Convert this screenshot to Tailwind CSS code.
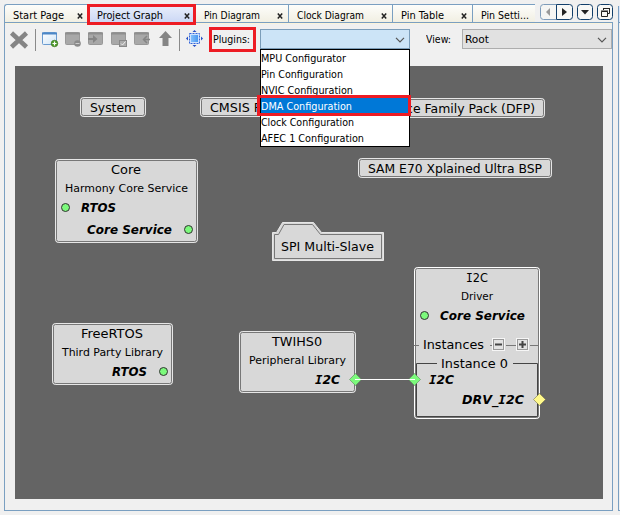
<!DOCTYPE html>
<html lang="en">
<head>
<meta charset="utf-8">
<title>Project Graph</title>
<script src="https://cdn.jsdelivr.net/npm/@tailwindcss/browser@4"></script>
</head>
<body class="relative h-[515px] w-[620px] overflow-hidden bg-[#f0f0f0] font-['DejaVu_Sans_Condensed','DejaVu_Sans',sans-serif] text-[11px] text-black">
<div class="flex h-full pt-1 pl-1">
  <section class="flex h-[507px] w-[609px] flex-col">
    <nav class="flex h-[19px] shrink-0 border-b border-[#7a9fc1]">
      <div class="flex h-[18px] w-[84px] items-center justify-between rounded-tl-[3px] border-t border-l border-[#7a9fc1] bg-linear-to-b from-[#fdfdfb] to-[#f1efe2] pr-[5px] pl-2"><svg width="54" height="14" class="overflow-visible"><text x="0" y="11.500" textLength="51" lengthAdjust="spacingAndGlyphs">Start Page</text></svg><svg width="6" height="6" class="mt-1"><path d="M.8 .5L5.2 5.5M5.2 .5L.8 5.5" stroke="#222" stroke-width="1.500"/></svg></div>
      <div class="flex h-[18px] w-[108px] items-center justify-between border-t border-[#7a9fc1] bg-linear-to-b from-[#e9effb] to-[#ccd8f5] pr-[6px] pl-[9px]"><svg width="70" height="14" class="overflow-visible"><text x="0" y="11.500" textLength="66" lengthAdjust="spacingAndGlyphs">Project Graph</text></svg><svg width="6" height="6" class="mt-1"><path d="M.8 .5L5.2 5.5M5.2 .5L.8 5.5" stroke="#222" stroke-width="1.500"/></svg></div>
      <div class="flex h-[18px] w-[93px] items-center justify-between border-t border-r border-[#7a9fc1] bg-linear-to-b from-[#fdfdfb] to-[#f1efe2] pr-[5px] pl-2"><svg width="60" height="14" class="overflow-visible"><text x="0" y="11.500" textLength="56" lengthAdjust="spacingAndGlyphs">Pin Diagram</text></svg><svg width="6" height="6" class="mt-1"><path d="M.8 .5L5.2 5.5M5.2 .5L.8 5.5" stroke="#222" stroke-width="1.500"/></svg></div>
      <div class="flex h-[18px] w-[104px] items-center justify-between border-t border-r border-[#7a9fc1] bg-linear-to-b from-[#fdfdfb] to-[#f1efe2] pr-[5px] pl-2"><svg width="71" height="14" class="overflow-visible"><text x="0" y="11.500" textLength="67" lengthAdjust="spacingAndGlyphs">Clock Diagram</text></svg><svg width="6" height="6" class="mt-1"><path d="M.8 .5L5.2 5.5M5.2 .5L.8 5.5" stroke="#222" stroke-width="1.500"/></svg></div>
      <div class="flex h-[18px] w-[80px] items-center justify-between border-t border-r border-[#7a9fc1] bg-linear-to-b from-[#fdfdfb] to-[#f1efe2] pr-[5px] pl-[8px]"><svg width="48" height="14" class="overflow-visible"><text x="0" y="11.500" textLength="43" lengthAdjust="spacingAndGlyphs">Pin Table</text></svg><svg width="6" height="6" class="mt-1"><path d="M.8 .5L5.2 5.5M5.2 .5L.8 5.5" stroke="#222" stroke-width="1.500"/></svg></div>
      <div class="flex h-[18px] w-[62px] items-center border-t border-[#7a9fc1] bg-linear-to-b from-[#fdfdfb] to-[#f1efe2] pl-2"><svg width="50" height="14" class="overflow-visible"><text x="0" y="11.500" textLength="48" lengthAdjust="spacingAndGlyphs">Pin Setti...</text></svg></div>
      <div class="ml-[5px] flex h-4 gap-1">
        <svg width="33" height="16"><path d="M16.500 .5H3.500Q.5 .5 .5 3.500V12.500Q.5 15.500 3.500 15.500H16.500" fill="#f5f5f3" stroke="#7d9bb9"/><path d="M16.500 .5H29.500Q32.500 .5 32.500 3.500V12.500Q32.500 15.500 29.500 15.500H16.500Z" fill="#f8f8f6" stroke="#123f6b"/><path d="M10 4V12L6 8Z" fill="#999"/><path d="M22 4V12L27 8Z" fill="#222"/></svg>
        <svg width="16" height="16"><rect x=".5" y=".5" width="15" height="15" rx="3" fill="#f8f8f6" stroke="#123f6b"/><path d="M4 6H12L8 10.500Z" fill="#222"/></svg>
        <svg width="16" height="16"><rect x=".5" y=".5" width="15" height="15" rx="3" fill="#f8f8f6" stroke="#123f6b"/><path d="M6.500 6V4.500H12.500V9.500H10.500M6 4.500H13M4.500 7.500H10.500V12.500H4.500ZM4 7H11" fill="none" stroke="#222"/></svg>
      </div>
    </nav>
    <div class="flex min-h-0 flex-1 flex-col border-r border-b border-l border-[#7a9fc1]">
      <header class="flex h-[43px] shrink-0 border-t border-[#fbf3da] pt-px">
        <svg width="204" height="41" viewBox="5 25 204 41" class="shrink-0">
          <defs>
            <linearGradient id="sky" x2="1" y2="1"><stop stop-color="#fff"/><stop offset="1" stop-color="#cfe4f6"/></linearGradient>
            <linearGradient id="core"><stop stop-color="#83c0fb"/><stop offset="1" stop-color="#4a98f0"/></linearGradient>
          </defs>
          <path d="M11.500 33L26.500 47M26.500 33L11.500 47" stroke="#858585" stroke-width="4.500"/>
          <path d="M35.500 29V51M179.500 29V51" stroke="#8a8a8a"/>
          <g><rect x="42.500" y="32.500" width="14" height="12" rx="1" fill="url(#sky)" stroke="#6a9bd0"/><path d="M42 33.500H57" stroke="#4c87c6" stroke-width="2"/><circle cx="54.500" cy="43.500" r="3.300" fill="#4f9a2c" stroke="#357019" stroke-width=".6"/><path d="M54.500 41.500V45.500M52.500 43.500H56.500" stroke="#fff" stroke-width="1.200"/></g>
          <g fill="#a8a8a8" stroke="#989898"><rect x="65.500" y="32.500" width="14" height="12" rx="1"/><rect x="88.500" y="32.500" width="14" height="12" rx="1"/><rect x="111.500" y="32.500" width="14" height="12" rx="1"/><rect x="134.500" y="32.500" width="14" height="12" rx="1"/></g>
          <path d="M65 33.500H80M88 33.500H103M111 33.500H126M134 33.500H149" stroke="#8e8e8e" stroke-width="2"/>
          <circle cx="77.500" cy="43.500" r="3.300" fill="#8b8b8b"/><path d="M75.500 43.500H79.500" stroke="#ccc"/>
          <path d="M88 38H93V35L97.500 39L93 43V40H88Z" fill="#858585"/>
          <rect x="119.500" y="40.500" width="7" height="6" fill="#aaa" stroke="#888"/><path d="M121 43.500L122.500 45L125.500 41.500" fill="none" stroke="#eee"/>
          <path d="M147 36L143.500 39.500L147 43M144 39.500H150" fill="none" stroke="#858585" stroke-width="1.500"/>
          <path d="M165.500 31L172 38H168.500V46H162.500V38H159Z" fill="#858585"/>
          <rect x="189.500" y="33.500" width="10" height="10" fill="#cfe3ff" stroke="#3565d8" stroke-dasharray="2 1"/><rect x="191" y="35" width="7" height="7" fill="url(#core)"/>
          <path d="M194.500 30L192.500 32H196.500ZM194.500 47L192.500 45H196.500ZM186 38.500L188 36.500V40.500ZM203 38.500L201 36.500V40.500Z" fill="#244fc6"/>
        </svg>
        <div class="mt-[2px] flex h-[25px] w-[51px] shrink-0 items-start pl-1"><svg width="42" height="22" class="overflow-visible"><text x="0" y="16" textLength="37" lengthAdjust="spacingAndGlyphs">Plugins:</text></svg></div>
        <div class="mt-1 flex h-5 w-[150px] shrink-0 items-center justify-end border border-[#7b9db9] bg-[#cce4f7] pr-1"><svg width="10" height="6" class="mt-[2px]"><path d="M1 .8L5 4.800L9 .8" fill="none" stroke="#555" stroke-width="1.200"/></svg></div>
        <div class="mt-1 ml-4 flex h-5 w-9 shrink-0"><svg width="30" height="20"><text x="0" y="14" textLength="25" lengthAdjust="spacingAndGlyphs">View:</text></svg></div>
        <div class="mt-1 flex h-5 w-[150px] shrink-0 items-center justify-between border border-[#adadad] bg-[#e1e1e1] pr-1 pl-[2px]"><svg width="30" height="18"><text x="0" y="13" textLength="24" lengthAdjust="spacingAndGlyphs">Root</text></svg><svg width="10" height="6" class="mt-[2px]"><path d="M1 .8L5 4.800L9 .8" fill="none" stroke="#555" stroke-width="1.200"/></svg></div>
      </header>
      <main class="ml-[10px] h-[433px] w-[588px] bg-[#646464]">
        <svg width="588" height="433" viewBox="15 66 588 433" class="font-['DejaVu_Sans',sans-serif]">
          <g fill="#d8d8d8" stroke="#e6e6e6">
            <rect x="80.500" y="97.500" width="65" height="19" rx="3"/><rect x="200.500" y="97.500" width="120" height="19" rx="3"/><rect x="360.500" y="98.500" width="184" height="19" rx="3"/><rect x="358.500" y="158.500" width="193" height="19" rx="3"/>
            <rect x="55.500" y="159.500" width="142" height="83" rx="3"/><rect x="52.500" y="323.500" width="120" height="61" rx="3"/><rect x="239.500" y="331.500" width="116" height="61" rx="3"/><rect x="414.500" y="267.500" width="125" height="151" rx="3" stroke="#fff"/>
          </g>
          <g fill="none" stroke="#777">
            <rect x="81.500" y="98.500" width="63" height="17" rx="2"/><rect x="201.500" y="98.500" width="118" height="17" rx="2"/><rect x="361.500" y="99.500" width="182" height="17" rx="2"/><rect x="359.500" y="159.500" width="191" height="17" rx="2"/>
            <rect x="56.500" y="160.500" width="140" height="81" rx="2"/><rect x="53.500" y="324.500" width="118" height="59" rx="2"/><rect x="240.500" y="332.500" width="114" height="59" rx="2"/><rect x="415.500" y="268.500" width="123" height="149" rx="2"/>
          </g>
          <path d="M272.500 232.500H276.500L282.500 222.500H313.500L321.500 232.500H383.500V260.500H272.500Z" fill="#d8d8d8" stroke="#e6e6e6"/>
          <path d="M274.500 234.500H278.500L284 224.500H312.500L320.500 234.500H381.500V258.500H274.500Z" fill="none" stroke="#777"/>
          <g font-size="12.500">
            <text x="90" y="112" textLength="46" lengthAdjust="spacingAndGlyphs">System</text>
            <text x="210" y="112" textLength="73" lengthAdjust="spacingAndGlyphs">CMSIS Pack</text>
            <text x="378" y="113" textLength="157" lengthAdjust="spacingAndGlyphs">Device Family Pack (DFP)</text>
            <text x="368" y="173" textLength="174" lengthAdjust="spacingAndGlyphs">SAM E70 Xplained Ultra BSP</text>
            <text x="111" y="174" textLength="30" lengthAdjust="spacingAndGlyphs">Core</text>
            <text x="281" y="251" textLength="93" lengthAdjust="spacingAndGlyphs">SPI Multi-Slave</text>
            <text x="81" y="338" textLength="62" lengthAdjust="spacingAndGlyphs">FreeRTOS</text>
            <text x="272" y="346" textLength="50" lengthAdjust="spacingAndGlyphs">TWIHS0</text>
            <text x="466" y="282" textLength="22" lengthAdjust="spacingAndGlyphs"><tspan class="font-['DejaVu_Sans_Mono',monospace]">I</tspan>2C</text>
            <text x="423" y="349" textLength="61" lengthAdjust="spacingAndGlyphs">Instances</text>
            <text x="441" y="368" textLength="67" lengthAdjust="spacingAndGlyphs">Instance 0</text>
          </g>
          <g font-size="10">
            <text x="65" y="192" textLength="123" lengthAdjust="spacingAndGlyphs">Harmony Core Service</text>
            <text x="62" y="356" textLength="101" lengthAdjust="spacingAndGlyphs">Third Party Library</text>
            <text x="249" y="364" textLength="97" lengthAdjust="spacingAndGlyphs">Peripheral Library</text>
            <text x="461" y="300" textLength="32" lengthAdjust="spacingAndGlyphs">Driver</text>
          </g>
          <g font-size="12.500" font-weight="bold" font-style="italic">
            <text x="81" y="212" textLength="35" lengthAdjust="spacingAndGlyphs">RTOS</text>
            <text x="87" y="234" textLength="85" lengthAdjust="spacingAndGlyphs">Core Service</text>
            <text x="112" y="376" textLength="35" lengthAdjust="spacingAndGlyphs">RTOS</text>
            <text x="315" y="384" textLength="25" lengthAdjust="spacingAndGlyphs"><tspan class="font-['DejaVu_Sans_Mono',monospace]">I</tspan>2C</text>
            <text x="440" y="320" textLength="85" lengthAdjust="spacingAndGlyphs">Core Service</text>
            <text x="429" y="384" textLength="25" lengthAdjust="spacingAndGlyphs"><tspan class="font-['DejaVu_Sans_Mono',monospace]">I</tspan>2C</text>
            <text x="462" y="404" textLength="62" lengthAdjust="spacingAndGlyphs">DRV_<tspan class="font-['DejaVu_Sans_Mono',monospace]">I</tspan>2C</text>
          </g>
          <g fill="#7cfa7c" stroke="#333"><circle cx="65.500" cy="207.500" r="4"/><circle cx="188.500" cy="229.500" r="4"/><circle cx="163.500" cy="371.500" r="4"/><circle cx="424.500" cy="315.500" r="4"/></g>
          <path d="M414 345.500H419M490 345.500H493M506 345.500H516M530 345.500H539" stroke="#777"/>
          <g fill="#e3e3e3" stroke="#f6f6f6"><rect x="492.500" y="338.500" width="12" height="12"/><rect x="516.500" y="338.500" width="12" height="12"/></g>
          <g fill="none" stroke="#999"><rect x="493.500" y="339.500" width="10" height="10"/><rect x="517.500" y="339.500" width="10" height="10"/></g>
          <path d="M495 344.500H502M519 344.500H526M522.500 341V348" stroke="#444" stroke-width="2"/>
          <path d="M437 363.500H416.500V416.500H537.500V363.500H513" fill="none" stroke="#444"/>
          <path d="M355.500 373.500L361.500 379.500L355.500 385.500L349.500 379.500ZM414.500 373.500L420.500 379.500L414.500 385.500L408.500 379.500Z" fill="#7cfa7c" stroke="#5a8a5a" stroke-width=".6"/>
          <path d="M355 379.500H415" stroke="#fff"/>
          <path d="M539.500 393.500L545.500 399.500L539.500 405.500L533.500 399.500Z" fill="#fff98c" stroke="#77744a" stroke-width=".6"/>
        </svg>
      </main>
    </div>
  </section>
  <aside class="mt-[2px] ml-[5px] h-[505px] w-1 border-b border-l border-[#7a9fc1]"><div class="h-[17px] border-b border-[#7a9fc1] bg-[#dce5f8]"></div></aside>
</div>
<ul class="absolute top-[49px] left-[260px] h-[98px] w-[150px] border border-black bg-white">
  <li class="h-4"><svg width="148" height="16"><text x="0" y="12" textLength="85" lengthAdjust="spacingAndGlyphs">MPU Configurator</text></svg></li>
  <li class="h-4"><svg width="148" height="16"><text x="0" y="12" textLength="82" lengthAdjust="spacingAndGlyphs">Pin Configuration</text></svg></li>
  <li class="h-4"><svg width="148" height="16"><text x="0" y="12" textLength="92" lengthAdjust="spacingAndGlyphs">NVIC Configuration</text></svg></li>
  <li class="h-4 bg-[#0078d7]"><svg width="148" height="16"><text x="0" y="12" fill="#fff" textLength="91" lengthAdjust="spacingAndGlyphs">DMA Configuration</text></svg></li>
  <li class="h-4"><svg width="148" height="16"><text x="0" y="12" textLength="93" lengthAdjust="spacingAndGlyphs">Clock Configuration</text></svg></li>
  <li class="h-4"><svg width="148" height="16"><text x="0" y="12" textLength="103" lengthAdjust="spacingAndGlyphs">AFEC 1 Configuration</text></svg></li>
</ul>
<div class="absolute top-1 left-[87px] h-[21px] w-[109px] border-[3px] border-[#ed1c24]"></div>
<div class="absolute top-[27px] left-[209px] h-[25px] w-[47px] border-[3px] border-[#ed1c24]"></div>
<div class="absolute top-[95px] left-[257px] h-[21px] w-[154px] border-[3px] border-[#ed1c24]"></div>
</body>
</html>
